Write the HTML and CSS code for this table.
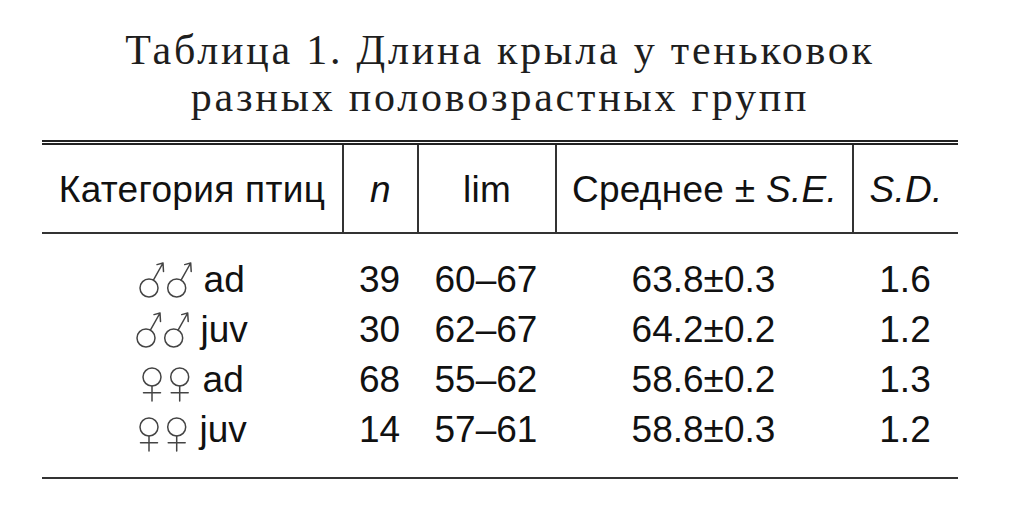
FILE: index.html
```html
<!DOCTYPE html>
<html lang="ru">
<head>
<meta charset="utf-8">
<title>Таблица 1</title>
<link rel="stylesheet" href="styles.css">
</head>
<body>
<main class="page">
  <h1 class="caption">Таблица 1. Длина крыла у теньковок<br>разных половозрастных групп</h1>
  <table class="data">
    <colgroup>
      <col class="c-cat">
      <col class="c-n">
      <col class="c-lim">
      <col class="c-mean">
      <col class="c-sd">
    </colgroup>
    <thead>
      <tr>
        <th>Категория птиц</th>
        <th><i>n</i></th>
        <th>lim</th>
        <th>Среднее ± <i>S.E.</i></th>
        <th><i>S.D.</i></th>
      </tr>
    </thead>
    <tbody>
      <tr>
        <td class="cat"><svg class="sym male" viewBox="0 0 54 38" width="54" height="38" role="img" aria-label="♂♂"><title>♂♂</title><g><circle cx="10" cy="27" r="9"/><path d="M14.4 19.1 L24 2 M24 2 L18 3.6 M24 2 L24.5 10.5"/></g><g transform="translate(27.7 0)"><circle cx="10" cy="27" r="9"/><path d="M14.4 19.1 L24 2 M24 2 L18 3.6 M24 2 L24.5 10.5"/></g></svg> ad</td>
        <td>39</td><td>60–67</td><td>63.8±0.3</td><td>1.6</td>
      </tr>
      <tr>
        <td class="cat"><svg class="sym male" viewBox="0 0 54 38" width="54" height="38" role="img" aria-label="♂♂"><title>♂♂</title><g><circle cx="10" cy="27" r="9"/><path d="M14.4 19.1 L24 2 M24 2 L18 3.6 M24 2 L24.5 10.5"/></g><g transform="translate(27.7 0)"><circle cx="10" cy="27" r="9"/><path d="M14.4 19.1 L24 2 M24 2 L18 3.6 M24 2 L24.5 10.5"/></g></svg> juv</td>
        <td>30</td><td>62–67</td><td>64.2±0.2</td><td>1.2</td>
      </tr>
      <tr>
        <td class="cat"><svg class="sym female" viewBox="0 0 52 42" width="52" height="42" role="img" aria-label="♀♀"><title>♀♀</title><g><circle cx="12" cy="17" r="9"/><path d="M12 26 L12 41 M3.5 32.7 L20.5 32.7"/></g><g transform="translate(27.7 0)"><circle cx="12" cy="17" r="9"/><path d="M12 26 L12 41 M3.5 32.7 L20.5 32.7"/></g></svg> ad</td>
        <td>68</td><td>55–62</td><td>58.6±0.2</td><td>1.3</td>
      </tr>
      <tr>
        <td class="cat"><svg class="sym female" viewBox="0 0 52 42" width="52" height="42" role="img" aria-label="♀♀"><title>♀♀</title><g><circle cx="12" cy="17" r="9"/><path d="M12 26 L12 41 M3.5 32.7 L20.5 32.7"/></g><g transform="translate(27.7 0)"><circle cx="12" cy="17" r="9"/><path d="M12 26 L12 41 M3.5 32.7 L20.5 32.7"/></g></svg> juv</td>
        <td>14</td><td>57–61</td><td>58.8±0.3</td><td>1.2</td>
      </tr>
    </tbody>
  </table>
</main>
</body>
</html>
```

FILE: styles.css
```css
html, body {
  margin: 0;
  padding: 0;
  background: #fff;
}

.page {
  padding: 27px 0 0 42px;
  width: 916px;
}

.caption {
  margin: 0;
  font-family: "Liberation Serif", "Times New Roman", serif;
  font-weight: normal;
  font-size: 42px;
  line-height: 46.5px;
  letter-spacing: 2.8px;
  text-align: center;
  color: #1e1e1e;
}

.data {
  margin-top: 20px;
  width: 916px;
  table-layout: fixed;
  border-collapse: separate;
  border-spacing: 0;
  border-top: 5px double #222;
  border-bottom: 2px solid #333;
  font-family: "Liberation Sans", Arial, sans-serif;
  font-size: 37px;
  color: #111;
}

.c-cat { width: 300px; }
.c-n { width: 75px; }
.c-lim { width: 138px; }
.c-mean { width: 297px; }
.c-sd { width: 106px; }

.data th {
  font-weight: normal;
  height: 89px;
  padding: 2px 0 0;
  line-height: 40px;
  letter-spacing: 0.3px;
  text-align: center;
  border-bottom: 2px solid #333;
  box-sizing: border-box;
  vertical-align: middle;
}

.data th + th {
  border-left: 2px solid #333;
}

.data td {
  padding: 0;
  line-height: 50px;
  text-align: center;
  white-space: nowrap;
}

.data tbody tr:first-child td {
  padding-top: 21px;
}

.data tbody tr:last-child td {
  padding-bottom: 22px;
}

.sym {
  fill: none;
  stroke: #444;
  stroke-width: 1.5;
  stroke-linecap: round;
  stroke-linejoin: round;
}

.sym.male {
  vertical-align: -7px;
}

.sym.female {
  vertical-align: -10px;
}
```
